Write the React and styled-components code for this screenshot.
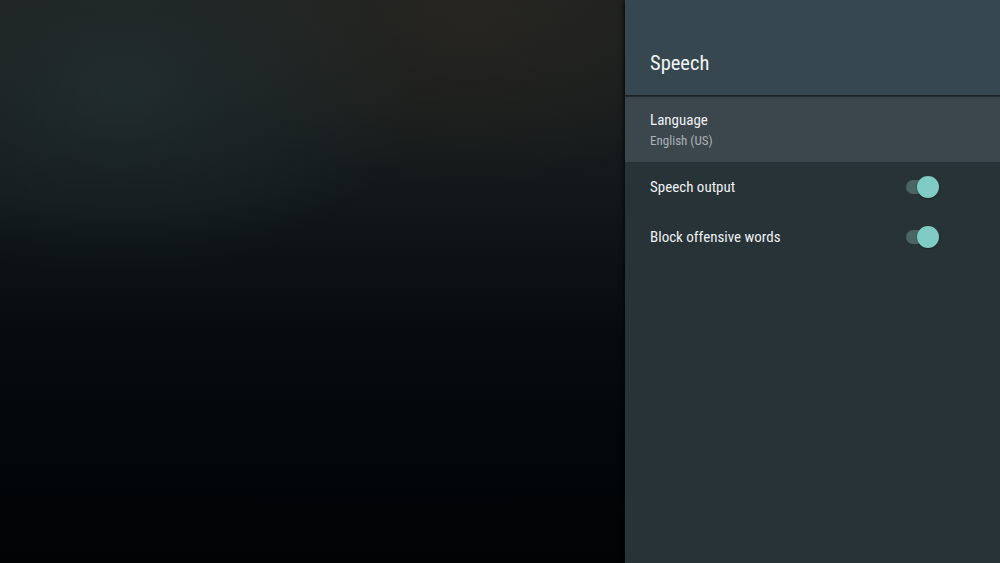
import React, { useState } from "react";
import styled, { createGlobalStyle } from "styled-components";

const Global = createGlobalStyle`
  html, body { margin: 0; padding: 0; height: 100%; background: #000; }
  #root { height: 100%; }
  * { box-sizing: border-box; }
`;

const Screen = styled.div`
  width: 1000px;
  height: 563px;
  display: flex;
  overflow: hidden;
  font-family: Roboto, "Noto Sans", sans-serif;
  font-stretch: 75%;
`;

const Backdrop = styled.div`
  flex: 1;
  background:
    radial-gradient(ellipse 420px 260px at 120px 90px, rgba(40, 56, 56, 0.55), transparent 70%),
    radial-gradient(ellipse 380px 220px at 470px 20px, rgba(42, 38, 33, 0.7), transparent 75%),
    linear-gradient(180deg, #1e2221 0%, #121819 35%, #060b0d 60%, #010304 100%);
`;

const Panel = styled.aside`
  width: 375px;
  display: flex;
  flex-direction: column;
  background: #283338;
  box-shadow: -2px 0 4px rgba(0, 0, 0, 0.5);
`;

const Header = styled.header`
  height: 95px;
  display: flex;
  align-items: flex-end;
  padding: 0 25px 20px;
  background: #37474f;
  box-shadow: 0 1px 2px rgba(0, 0, 0, 0.45);
  position: relative;
  z-index: 1;
`;

const Title = styled.h1`
  margin: 0;
  font-size: 20.5px;
  line-height: 24px;
  font-weight: 400;
  color: #f2f4f5;
`;

const List = styled.div`
  display: flex;
  flex-direction: column;
  padding-top: 2px;
`;

const Row = styled.div`
  display: flex;
  align-items: center;
  justify-content: space-between;
  padding: 0 62px 0 25px;
  height: ${(p) => (p.$tall ? "65px" : "50px")};
  background: ${(p) => (p.$focused ? "#3c474d" : "transparent")};
`;

const Texts = styled.div`
  display: flex;
  flex-direction: column;
  gap: 4px;
`;

const Label = styled.span`
  font-size: 15px;
  line-height: 18px;
  color: #eef1f2;
`;

const Sub = styled.span`
  font-size: 13px;
  line-height: 16px;
  color: #a9b2b6;
`;

const Track = styled.button`
  position: relative;
  width: 34px;
  height: 22px;
  padding: 0;
  border: 0;
  background: transparent;
  cursor: pointer;
  &::before {
    content: "";
    position: absolute;
    left: 2px;
    top: 4px;
    width: 30px;
    height: 14px;
    border-radius: 7px;
    background: ${(p) => (p.$on ? "#4a6562" : "#5b6569")};
  }
`;

const Knob = styled.span`
  position: absolute;
  top: 0;
  left: ${(p) => (p.$on ? "13px" : "0")};
  width: 22px;
  height: 22px;
  border-radius: 50%;
  background: ${(p) => (p.$on ? "#80cbc4" : "#cfd5d8")};
  box-shadow: 0 1px 2px rgba(0, 0, 0, 0.35);
`;

function Toggle({ on, onClick }) {
  return (
    <Track $on={on} onClick={onClick} aria-pressed={on}>
      <Knob $on={on} />
    </Track>
  );
}

export default function App() {
  const [speech, setSpeech] = useState(true);
  const [block, setBlock] = useState(true);
  return (
    <>
      <Global />
      <Screen>
        <Backdrop />
        <Panel>
          <Header>
            <Title>Speech</Title>
          </Header>
          <List>
            <Row $tall $focused>
              <Texts>
                <Label>Language</Label>
                <Sub>English (US)</Sub>
              </Texts>
            </Row>
            <Row>
              <Label>Speech output</Label>
              <Toggle on={speech} onClick={() => setSpeech(!speech)} />
            </Row>
            <Row>
              <Label>Block offensive words</Label>
              <Toggle on={block} onClick={() => setBlock(!block)} />
            </Row>
          </List>
        </Panel>
      </Screen>
    </>
  );
}
